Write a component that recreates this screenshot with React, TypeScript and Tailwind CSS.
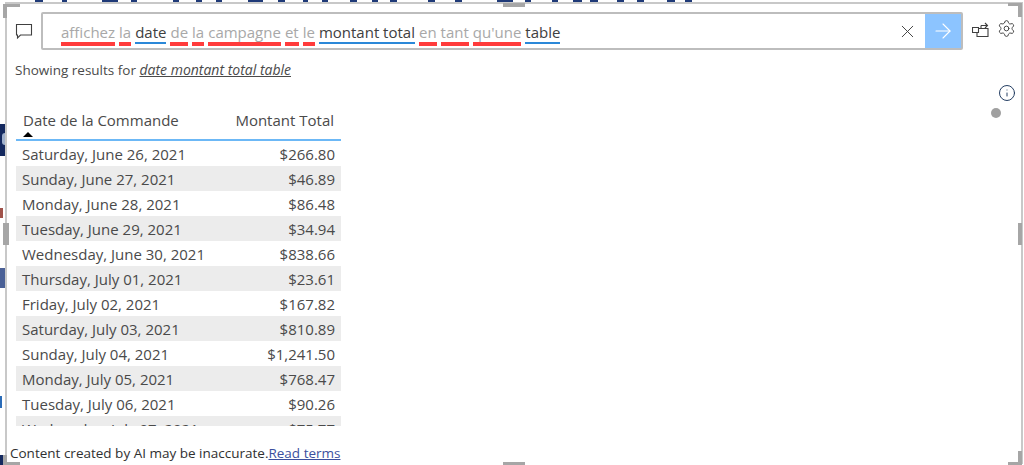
import { Settings, X, ArrowRight, Info } from 'lucide-react'

const rows = [
  ['Saturday, June 26, 2021', '$266.80'],
  ['Sunday, June 27, 2021', '$46.89'],
  ['Monday, June 28, 2021', '$86.48'],
  ['Tuesday, June 29, 2021', '$34.94'],
  ['Wednesday, June 30, 2021', '$838.66'],
  ['Thursday, July 01, 2021', '$23.61'],
  ['Friday, July 02, 2021', '$167.82'],
  ['Saturday, July 03, 2021', '$810.89'],
  ['Sunday, July 04, 2021', '$1,241.50'],
  ['Monday, July 05, 2021', '$768.47'],
  ['Tuesday, July 06, 2021', '$90.26'],
  ['Wednesday, July 07, 2021', '$75.77'],
]

const words: [string, boolean][] = [
  ['affichez', false],
  ['la', false],
  ['date', true],
  ['de', false],
  ['la', false],
  ['campagne', false],
  ['et', false],
  ['le', false],
  ['montant total', true],
  ['en', false],
  ['tant', false],
  ["qu'une", false],
  ['table', true],
]

// bits of the report page peeking out above the panel
const topBits = [
  [35, 8], [62, 5], [102, 16], [131, 6], [173, 6], [196, 6], [216, 6], [248, 15], [278, 7],
  [303, 5], [322, 6], [350, 7], [372, 6], [390, 7], [428, 7], [455, 7], [497, 16], [525, 6],
  [552, 6], [573, 9], [590, 8], [617, 7], [637, 7], [667, 8], [685, 7],
]

const Handle = ({ className }: { className: string }) => <div className={`absolute border-[#a6a6a6] ${className}`} />

export default function App() {
  return (
    <div className="relative h-[465px] w-[1024px] overflow-hidden bg-white pb-[1px] pl-[5px] pr-[1px] pt-[2px] font-['Open_Sans',sans-serif] text-[#4a4a4a]">
      {topBits.map(([x, w]) => (
        <div key={x} className="absolute top-0 h-[3px] bg-[#1f3a78]" style={{ left: x, width: w }} />
      ))}
      <div className="absolute left-0 top-[124px] h-[32px] w-[5px] bg-[#14295f]" />
      <div className="absolute left-[2px] top-[133px] h-[12px] w-[3px] rounded-l-full bg-[#9fb0cc]" />
      <div className="absolute left-0 top-[208px] h-[10px] w-[3px] bg-[#a0524a]" />
      <div className="absolute left-0 top-[268px] h-[20px] w-[5px] bg-[#4a6096]" />
      <div className="absolute left-0 top-[396px] h-[12px] w-[2px] bg-[#2b6cb8]" />
      <div className="absolute left-0 top-[455px] h-[10px] w-[5px] bg-[#14295f]" />

      <div className="relative flex h-full flex-col border-x-2 border-t-2 border-[#c8c8c8] bg-white">
        <div className="flex h-[41px] items-start px-[8px] pt-[8px]">
          <svg className="mt-[11px] shrink-0" width="18" height="17" viewBox="0 0 18 17" fill="none" stroke="#404040" strokeWidth="1.1">
            <path d="M1.500 1.500h15v10.500h-11l-3 3v-3h-1z" />
          </svg>
          <div className="ml-[8px] flex h-[38px] w-[922px] shrink-0 items-stretch rounded-[2px] border-2 border-[#bdbdbd]">
            <div className="flex flex-1 items-start gap-[4px] pl-[18px] pt-[7px] text-[15px] leading-[22px]">
              {words.map(([word, known], i) => (
                <span
                  key={i}
                  className={
                    known
                      ? 'h-[23px] whitespace-nowrap border-b-[2px] border-[#2b88d8] text-[#404040]'
                      : 'h-[25px] whitespace-nowrap border-b-[4px] border-[#ff3b3b] text-[#a8a8a8]'
                  }
                >
                  {word}
                </span>
              ))}
            </div>
            <div className="flex w-[32px] items-center justify-center">
              <X size={21} strokeWidth={1.1} color="#404040" />
            </div>
            <div className="ml-[2px] flex w-[36px] items-center justify-center bg-[#8cc4ff]">
              <ArrowRight size={24} strokeWidth={1.1} color="#ffffff" />
            </div>
          </div>
          <div className="ml-[9px] mt-[7px] flex items-center gap-[8px]">
            <svg width="17" height="16" viewBox="0 0 17 16" fill="none" stroke="#404040" strokeWidth="1.1">
              <path d="M6.500 6.500H.5v5h6zM5 11.500v4h11v-8H6.500M9 4.500h6M13 2l2.500 2.500L13 7M9 4.500v3" />
            </svg>
            <Settings size={19} strokeWidth={1.2} color="#404040" />
          </div>
        </div>

        <div className="mt-[15px] pl-[8px] text-[13.500px] leading-[20px]">
          Showing results for <span className="text-[14px] italic underline">date montant total table</span>
        </div>

        <div className="flex min-h-0 flex-1 justify-between">
          <div className="ml-[9px] mt-[21px] h-[325px] w-[325px] overflow-hidden text-[15px]">
            <div className="flex h-[40px] justify-between border-b-2 border-[#6cb8f6] px-[7px] pt-[8px]">
              <div className="relative leading-[22px]">
                Date de la Commande
                <div className="absolute left-0 top-[23px] h-0 w-0 border-x-[5px] border-b-[5px] border-x-transparent border-b-black" />
              </div>
              <div className="leading-[22px]">Montant Total</div>
            </div>
            {rows.map(([date, amount], i) => (
              <div key={date} className={`flex h-[25px] shrink-0 items-center justify-between px-[6px] pt-px ${i % 2 === 1 ? 'bg-[#ececec]' : ''}`}>
                <span>{date}</span>
                <span>{amount}</span>
              </div>
            ))}
          </div>
          <div className="mr-[5px] mt-[4px] flex flex-col items-end">
            <Info size={18} strokeWidth={1.3} color="#1f3a5f" />
            <div className="mr-[15px] mt-[6px] size-[10px] rounded-full bg-[#a0a0a0]" />
          </div>
        </div>

        <div className="pb-[1px] pl-[3px] text-[13.500px] leading-[20px] text-[#303030]">
          Content created by AI may be inaccurate.<span className="text-[#3b4f9e] underline">Read terms</span>
        </div>
      </div>

      <Handle className="left-[3px] top-[4px] h-[14px] w-[17px] border-l-4 border-t-[3px]" />
      <Handle className="right-[2px] top-[3px] h-[14px] w-[14px] border-r-4 border-t-[3px]" />
      <Handle className="bottom-0 left-[3px] h-[10px] w-[17px] border-b-[3px] border-l-4" />
      <Handle className="bottom-0 right-[2px] h-[14px] w-[14px] border-b-[3px] border-r-4" />
      <Handle className="left-[503px] top-[3px] h-[4px] w-[22px] border-t-4" />
      <Handle className="bottom-0 left-[503px] h-[3px] w-[22px] border-b-[3px]" />
      <Handle className="left-[3px] top-[223px] h-[22px] w-[6px] border-l-[6px]" />
      <Handle className="right-[2px] top-[223px] h-[22px] w-[4px] border-r-4" />
    </div>
  )
}
